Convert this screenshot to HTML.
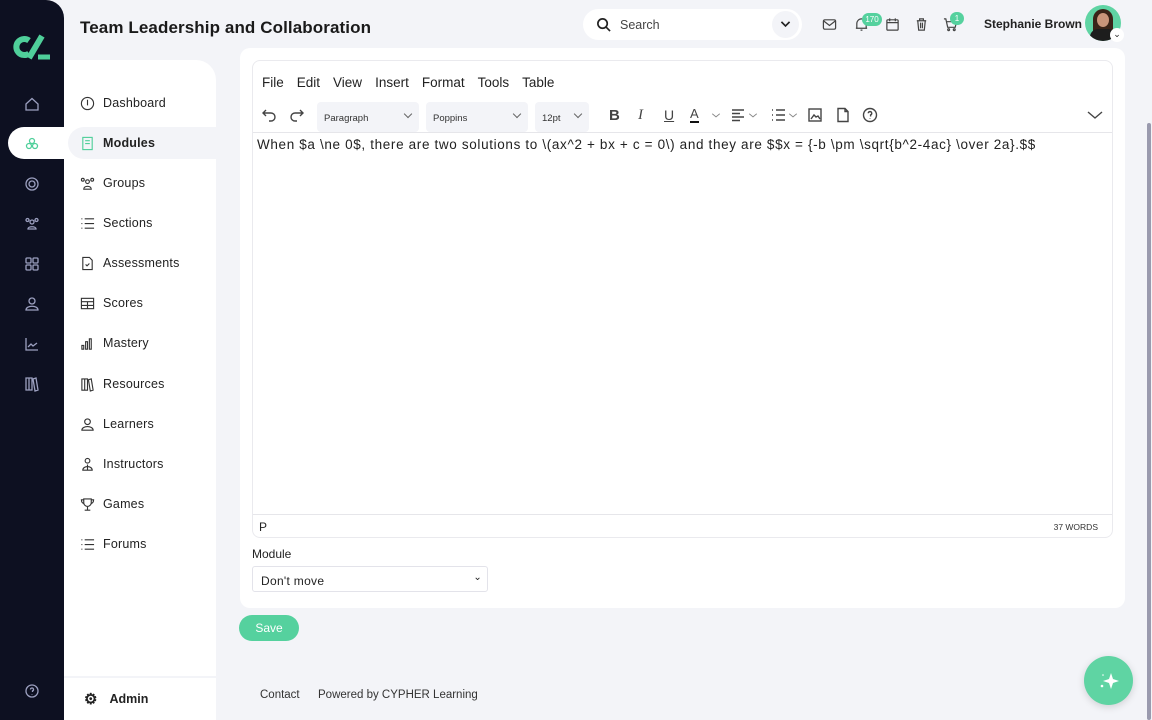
<!DOCTYPE html>
<html><head><meta charset="utf-8"><style>
*{box-sizing:border-box;margin:0;padding:0}
body{width:1152px;height:720px;overflow:hidden;background:#f3f4f8;font-family:"Liberation Sans",sans-serif;color:#222;position:relative}
.rail{position:absolute;left:0;top:0;width:64px;height:720px;background:#0d1021;border-top-right-radius:18px}
.rail svg{position:absolute;left:24px;width:16px;height:16px;fill:none;stroke:#9ca0c0;stroke-width:1.3}
.pill{position:absolute;left:8px;top:127px;width:60px;height:32px;background:#fff;border-radius:16px 0 0 16px}
.side{position:absolute;left:64px;top:60px;width:152px;height:660px;background:#fff;border-top-right-radius:20px}
.item{position:absolute;left:4px;width:148px;height:32px;display:flex;align-items:center;font-size:12.5px;color:#222;letter-spacing:0.2px}
.item svg{width:15px;height:15px;margin-left:12px;margin-right:8px;fill:none;stroke:#333;stroke-width:1.2}
.item.act{background:#f3f4f8;border-radius:16px 0 0 16px;font-weight:bold}
.item.act svg{stroke:#4fcf9a}
.admin{position:absolute;left:0;top:616px;width:152px;height:44px;border-top:2px solid #f3f4f8;display:flex;align-items:center;font-weight:bold;font-size:12.5px}
h1{position:absolute;left:80px;top:18px;font-size:17px;font-weight:bold;color:#1a1a1a;letter-spacing:0.1px}
.search{position:absolute;left:583px;top:9px;width:219px;height:31px;background:#fff;border-radius:16px;font-size:12.5px;color:#444}
.card{position:absolute;left:240px;top:48px;width:885px;height:560px;background:#fff;border-radius:10px}
.ed{position:absolute;left:12px;top:12px;width:861px;height:478px;border:1px solid #eaeaee;border-radius:8px}
.menu{position:absolute;top:14px;left:9px;font-size:13.5px;color:#222}
.menu span{margin-right:13px}
.sel{position:absolute;top:41px;height:30px;background:#f3f4f8;border-radius:4px;font-size:9.5px;color:#333;padding:11px 0 0 7px}
.sel i{position:absolute;right:8px;top:9px;width:6px;height:6px;border-right:1.2px solid #666;border-bottom:1.2px solid #666;transform:rotate(45deg)}
.tb svg{position:absolute;top:46px;width:16px;height:16px;fill:none;stroke:#444;stroke-width:1.4}
.txt{position:absolute;top:76px;left:4px;font-size:13.5px;color:#222;white-space:nowrap;letter-spacing:0.65px}
.save{position:absolute;left:239px;top:615px;width:60px;height:26px;background:#55d19e;border-radius:13px;color:#fff;font-size:12px;text-align:center;line-height:26px}
.fab{position:absolute;left:1084px;top:656px;width:49px;height:49px;border-radius:50%;background:#5fd4a3;box-shadow:0 2px 8px rgba(0,0,0,.15)}
.tico svg{position:absolute;top:17px;width:15px;height:15px;fill:none;stroke:#444;stroke-width:1.3}
.badge{position:absolute;background:#55d19e;color:#fff;font-size:8px;border-radius:8px;text-align:center;line-height:13px;height:13px}
</style></head><body>
<div class="rail">
 <svg viewBox="0 0 40 28" style="width:40px;height:28px;left:12px;top:33px;stroke:#4fcf9a;stroke-width:6;stroke-linecap:butt"><path d="M17 7.5A8 8 0 1 0 17 20.5"/><path d="M30 3L17 25"/><path d="M26 24h12" stroke-width="5"/></svg>
 <svg viewBox="0 0 16 16" style="top:96px"><path d="M2 8L8 2.5 14 8V14H2Z"/></svg>
 <div class="pill"></div>
 <svg viewBox="0 0 16 16" style="top:136px;stroke:#4fcf9a"><circle cx="8" cy="5" r="2.5"/><circle cx="5" cy="10" r="2.5"/><circle cx="11" cy="10" r="2.5"/></svg>
 <svg viewBox="0 0 16 16" style="top:176px"><circle cx="8" cy="8" r="6"/><circle cx="8" cy="8" r="3"/></svg>
 <svg viewBox="0 0 16 16" style="top:216px"><circle cx="8" cy="6" r="2"/><circle cx="3.5" cy="4" r="1.5"/><circle cx="12.5" cy="4" r="1.5"/><path d="M4 13c0-3 8-3 8 0Z"/></svg>
 <svg viewBox="0 0 16 16" style="top:256px"><rect x="2" y="2" width="5" height="5" rx="1"/><rect x="9" y="2" width="5" height="5" rx="1"/><rect x="2" y="9" width="5" height="5" rx="1"/><rect x="9" y="9" width="5" height="5" rx="1"/></svg>
 <svg viewBox="0 0 16 16" style="top:296px"><circle cx="8" cy="5" r="3"/><path d="M2 14c0-5 12-5 12 0Z"/></svg>
 <svg viewBox="0 0 16 16" style="top:336px"><path d="M2 2V14H14M4 11l3-3 2 2 4-3"/></svg>
 <svg viewBox="0 0 16 16" style="top:376px"><path d="M2 2h3v12H2ZM5 2h3v12H5ZM9 3l3-1 2 12-3 1Z"/></svg>
 <svg viewBox="0 0 16 16" style="top:683px"><circle cx="8" cy="8" r="6"/><path d="M6.5 6.5a1.5 1.5 0 1 1 2 1.4V9M8 11v.5"/></svg>
</div>
<div class="side">
 <div class="item" style="top:27px"><svg viewBox="0 0 16 16"><circle cx="8" cy="8" r="6.5"/><path d="M8 4v6"/></svg>Dashboard</div>
 <div class="item act" style="top:67px"><svg viewBox="0 0 16 16"><rect x="3" y="1.5" width="10" height="13"/><path d="M5.5 5h5M5.5 8h5"/></svg>Modules</div>
 <div class="item" style="top:107px"><svg viewBox="0 0 16 16"><circle cx="8" cy="6" r="2"/><circle cx="3" cy="4" r="1.5"/><circle cx="13" cy="4" r="1.5"/><path d="M4 14c0-4 8-4 8 0Z"/></svg>Groups</div>
 <div class="item" style="top:147px"><svg viewBox="0 0 16 16"><path d="M5 3h10M5 8h10M5 13h10M1.5 3h1M1.5 8h1M1.5 13h1"/></svg>Sections</div>
 <div class="item" style="top:187px"><svg viewBox="0 0 16 16"><path d="M3 1.5h7l3 3v10H3Z M6 9l1.5 1.5L10 8"/></svg>Assessments</div>
 <div class="item" style="top:227px"><svg viewBox="0 0 16 16"><rect x="1.5" y="2.5" width="13" height="11"/><path d="M1.5 6h13M1.5 10h13M8 6v7.5"/></svg>Scores</div>
 <div class="item" style="top:267px"><svg viewBox="0 0 16 16"><path d="M2 14V10h2v4ZM6 14V6h2v8ZM10 14V3h2v11Z"/></svg>Mastery</div>
 <div class="item" style="top:308px"><svg viewBox="0 0 16 16"><path d="M2 2h3v12H2ZM5 2h3v12H5ZM9 3l3-1 2 12-3 1Z"/></svg>Resources</div>
 <div class="item" style="top:348px"><svg viewBox="0 0 16 16"><circle cx="8" cy="5" r="3"/><path d="M2 14c0-5 12-5 12 0Z"/></svg>Learners</div>
 <div class="item" style="top:388px"><svg viewBox="0 0 16 16"><circle cx="8" cy="4" r="2.5"/><path d="M3 14c0-5 10-5 10 0ZM8 8v6"/></svg>Instructors</div>
 <div class="item" style="top:428px"><svg viewBox="0 0 16 16"><path d="M4 2h8v4a4 4 0 0 1-8 0ZM8 10v4M5 14h6M4 3H1.5c0 3 2 4 3 4M12 3h2.5c0 3-2 4-3 4"/></svg>Games</div>
 <div class="item" style="top:468px"><svg viewBox="0 0 16 16"><path d="M5 3h10M5 8h10M5 13h10M1.5 3h1M1.5 8h1M1.5 13h1"/></svg>Forums</div>
 <div class="admin"><span style="margin-left:20px;margin-right:12px;font-size:15px">⚙</span>Admin</div>
</div>
<h1>Team Leadership and Collaboration</h1>
<div class="search">
 <svg viewBox="0 0 16 16" style="position:absolute;left:13px;top:8px;width:15px;height:15px;fill:none;stroke:#222;stroke-width:1.8"><circle cx="7" cy="7" r="5"/><path d="M11 11l4 4"/></svg>
 <span style="position:absolute;left:37px;top:9px">Search</span>
 <div style="position:absolute;left:189px;top:2px;width:27px;height:27px;border-radius:50%;background:#f3f4f8"></div>
 <svg viewBox="0 0 16 16" style="position:absolute;left:196px;top:8px;width:13px;height:13px;fill:none;stroke:#222;stroke-width:2"><path d="M3 6l5 5 5-5"/></svg>
</div>
<div class="tico">
 <svg viewBox="0 0 16 16" style="left:822px"><rect x="1.5" y="3" width="13" height="10" rx="1.5"/><path d="M1.5 4l6.5 5 6.5-5"/></svg>
 <svg viewBox="0 0 16 16" style="left:854px"><path d="M3 12V7a5 5 0 0 1 10 0v5H3ZM2 12h12M7 14h2"/></svg>
 <svg viewBox="0 0 16 16" style="left:885px"><rect x="2" y="3" width="12" height="11" rx="1"/><path d="M2 6h12M5 1.5v3M11 1.5v3"/></svg>
 <svg viewBox="0 0 16 16" style="left:914px"><path d="M3 4h10M6 4V2h4v2M4 4l1 10h6l1-10M7 6v6M9 6v6"/></svg>
 <svg viewBox="0 0 16 16" style="left:943px"><path d="M1 2h2l2 9h8l1.5-6H4"/><circle cx="6" cy="13.5" r="1"/><circle cx="12" cy="13.5" r="1"/></svg>
</div>
<div class="badge" style="left:862px;top:13px;width:20px">170</div>
<div class="badge" style="left:950px;top:12px;width:14px">1</div>
<div style="position:absolute;left:984px;top:17px;font-size:12px;font-weight:bold">Stephanie Brown</div>
<div style="position:absolute;left:1085px;top:5px;width:36px;height:36px;border-radius:50%;background:#5fd4a3;overflow:hidden"><div style="position:absolute;left:8px;top:4px;width:20px;height:26px;border-radius:10px 10px 4px 4px;background:#3a2418"></div><div style="position:absolute;left:12px;top:8px;width:12px;height:14px;border-radius:50%;background:#c9957a"></div><div style="position:absolute;left:5px;top:24px;width:26px;height:16px;border-radius:8px 8px 0 0;background:#1d1d1d"></div></div>
<div style="position:absolute;left:1110px;top:28px;width:14px;height:14px;border-radius:50%;background:#fff;font-size:9px;text-align:center;line-height:13px">⌄</div>
<div class="card">
 <div class="ed">
  <div class="menu"><span>File</span><span>Edit</span><span>View</span><span>Insert</span><span>Format</span><span>Tools</span><span>Table</span></div>
  <div class="tb">
   <svg viewBox="0 0 16 16" style="left:8px"><path d="M5 3L2 6l3 3M2 6h8a4 4 0 0 1 0 8H8"/></svg>
   <svg viewBox="0 0 16 16" style="left:36px"><path d="M11 3l3 3-3 3M14 6H6a4 4 0 0 0 0 8h2"/></svg>
  </div>
  <div class="sel" style="left:64px;width:102px">Paragraph<i></i></div>
  <div class="sel" style="left:173px;width:102px">Poppins<i></i></div>
  <div class="sel" style="left:282px;width:54px">12pt<i></i></div>
  <div style="position:absolute;left:356px;top:46px;font-size:15px;font-weight:bold;color:#444">B</div>
  <div style="position:absolute;left:385px;top:46px;font-size:15px;font-style:italic;color:#444;font-family:'Liberation Serif'">I</div>
  <div style="position:absolute;left:411px;top:46px;font-size:14px;text-decoration:underline;color:#444">U</div>
  <div style="position:absolute;left:437px;top:46px;font-size:13px;color:#444;border-bottom:2.5px solid #111;line-height:14px">A</div>
  <div class="tb">
   <svg viewBox="0 0 16 16" style="left:477px"><path d="M2 3h12M2 6.5h8M2 10h12M2 13.5h8"/></svg>
   <svg viewBox="0 0 16 16" style="left:517px"><path d="M6 3h9M6 8h9M6 13h9M2 3h1M2 8h1M2 13h1"/></svg>
   <svg viewBox="0 0 16 16" style="left:554px"><rect x="2" y="2" width="12" height="12"/><path d="M4 12l3-4 2 2 2-1 2 3"/></svg>
   <svg viewBox="0 0 16 16" style="left:582px"><path d="M3 1.5h7l3 3v10H3ZM10 1.5v3h3"/></svg>
   <svg viewBox="0 0 16 16" style="left:609px"><circle cx="8" cy="8" r="6.5"/><path d="M6.3 6.3a1.7 1.7 0 1 1 2.3 1.6V9.5M8 11.5v.5"/></svg>
   <svg viewBox="0 0 16 16" style="left:458px;width:10px;stroke:#888"><path d="M2 6l6 5 6-5"/></svg>
   <svg viewBox="0 0 16 16" style="left:495px;width:10px;stroke:#888"><path d="M2 6l6 5 6-5"/></svg>
   <svg viewBox="0 0 16 16" style="left:535px;width:10px;stroke:#888"><path d="M2 6l6 5 6-5"/></svg>
   <svg viewBox="0 0 16 16" style="left:834px"><path d="M1 5l7 6 7-6"/></svg>
  </div>
  <div style="position:absolute;left:0;top:71px;width:859px;border-top:1px solid #e6e6ea"></div>
  <div class="txt">When $a \ne 0$, there are two solutions to \(ax^2 + bx + c = 0\) and they are $$x = {-b \pm \sqrt{b^2-4ac} \over 2a}.$$</div>
  <div style="position:absolute;left:0;top:453px;width:859px;border-top:1px solid #e6e6ea"></div>
  <div style="position:absolute;left:6px;top:459px;font-size:12px">P</div>
  <div style="position:absolute;right:14px;top:461px;font-size:8.5px;color:#333">37 WORDS</div>
 </div>
 <div style="position:absolute;left:12px;top:499px;font-size:12px;color:#222">Module</div>
 <div style="position:absolute;left:12px;top:518px;width:236px;height:26px;border:1px solid #e3e3ea;border-radius:3px;font-size:12px;padding:7px 0 0 8px;letter-spacing:0.3px">Don't move<span style="position:absolute;right:5px;top:5px;font-size:10px">⌄</span></div>
</div>
<div class="save">Save</div>
<div style="position:absolute;left:260px;top:689px;font-size:11.5px;color:#333">Contact</div>
<div style="position:absolute;left:318px;top:689px;font-size:11.5px;color:#333">Powered by CYPHER Learning</div>
<div class="fab"><svg viewBox="0 0 24 24" style="position:absolute;left:13px;top:13px;width:24px;height:24px;fill:#fff"><path d="M14 4l2 6 6 2-6 2-2 6-2-6-6-2 6-2Z"/><circle cx="5" cy="17" r="1.3"/><circle cx="6" cy="6" r="0.8"/></svg></div>
<div style="position:absolute;left:1147px;top:123px;width:4px;height:597px;background:#9a9aae;border-radius:2px"></div>
</body></html>
